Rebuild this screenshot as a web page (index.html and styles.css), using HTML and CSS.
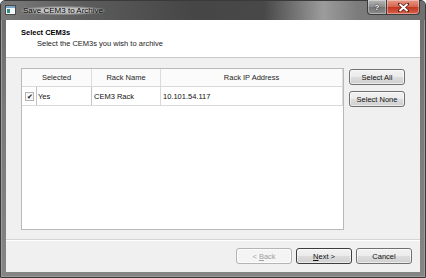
FILE: index.html
```html
<!DOCTYPE html>
<html lang="en">
<head>
    <meta charset="UTF-8">
    <title>Save CEM3 to Archive</title>
    <link rel="stylesheet" href="styles.css">
</head>
<body>
    <div class="window">
        <!-- Title bar -->
        <div class="titlebar">
            <svg class="app-icon" width="11" height="10" viewBox="0 0 11 10">
                <rect x="0.5" y="0.5" width="10" height="9" fill="#f4f7f9" stroke="#4a4a4a"/>
                <rect x="1" y="1" width="9" height="2" fill="#7aa7c9"/>
                <rect x="2" y="4" width="3" height="4" fill="#2f8f86"/>
            </svg>
            <span class="title">Save CEM3 to Archive</span>
            <div class="caption-buttons">
                <div class="cap-btn help">?</div>
                <div class="cap-btn close">
                    <svg width="11" height="9" viewBox="0 0 11 9">
                        <path d="M1.5 1 L9.5 8 M9.5 1 L1.5 8" stroke="#5a1d12" stroke-width="3.4" stroke-linecap="square"/>
                        <path d="M1.5 1 L9.5 8 M9.5 1 L1.5 8" stroke="#fff" stroke-width="2"/>
                    </svg>
                </div>
            </div>
        </div>

        <div class="client">
            <!-- Wizard page header -->
            <div class="wizard-header">
                <div class="page-title">Select CEM3s</div>
                <div class="page-subtitle">Select the CEM3s you wish to archive</div>
            </div>

            <div class="wizard-body">
                <div class="grid">
                    <div class="grid-head">
                        <div class="head-cell">Selected</div>
                        <div class="head-cell">Rack Name</div>
                        <div class="head-cell">Rack IP Address</div>
                    </div>
                    <div class="grid-row">
                        <div class="cell check-cell"><span class="checkbox">&#10004;</span></div>
                        <div class="cell yes-cell">Yes</div>
                        <div class="cell">CEM3 Rack</div>
                        <div class="cell">10.101.54.117</div>
                    </div>
                </div>
                <div class="side-buttons">
                    <button class="btn">Select All</button>
                    <button class="btn">Select None</button>
                </div>
            </div>

            <div class="wizard-footer">
                <button class="btn" disabled>&lt; <u>B</u>ack</button>
                <button class="btn default"><u>N</u>ext &gt;</button>
                <button class="btn">Cancel</button>
            </div>
        </div>
    </div>
</body>
</html>
```

FILE: styles.css
```css
* {
    margin: 0;
    padding: 0;
    box-sizing: border-box;
}

body {
    font-family: 'Liberation Sans', Arial, sans-serif;
    font-size: 7.5px;
    background: #ffffff;
}

.window {
    width: 426px;
    height: 278px;
    display: flex;
    flex-direction: column;
    border: 1px solid #3a3a3a;
    border-radius: 5px 5px 0 0;
    background: linear-gradient(to bottom, #6c6c6c, #7a7a7a 40%, #858585);
    box-shadow: inset 1px 0 #9a9a9a, inset -1px 0 #9a9a9a, inset 0 -1px #9a9a9a;
}

/* Title bar */
.titlebar {
    height: 19px;
    display: flex;
    align-items: center;
    padding: 0 5px 0 4px;
    border-radius: 4px 4px 0 0;
    background: linear-gradient(to right, #7a7a7a 0%, #5c5c5c 20%, #464646 45%, #484848 62%, #9c9c9c 76%, #7c7c7c 84%, #6f6f6f 100%);
}

.app-icon {
    margin-right: 5px;
    margin-top: -1px;
}

.title {
    color: #000;
    font-size: 8px;
    padding: 0 2px;
    border-radius: 6px;
    background: radial-gradient(ellipse at center, rgba(220,220,220,0.75) 40%, rgba(200,200,200,0) 75%);
    text-shadow: 0 0 2px rgba(255,255,255,0.7);
}

.caption-buttons {
    margin-left: auto;
    align-self: flex-start;
    margin-top: -1px;
    display: flex;
}

.cap-btn {
    height: 15px;
    display: flex;
    align-items: center;
    justify-content: center;
    border: 1px solid #3c3c3c;
    border-top: none;
    box-shadow: inset 0 0 0 1px rgba(255,255,255,0.35);
}

.help {
    width: 19px;
    border-right: none;
    border-radius: 0 0 0 4px;
    background: linear-gradient(to bottom, #b5b5b5, #8c8c8c 50%, #777 51%, #8a8a8a);
    color: #fff;
    font-weight: bold;
    font-size: 8px;
    text-shadow: 0 0 2px #222, 0 0 1px #222;
}

.close {
    width: 34px;
    border-radius: 0 0 4px 0;
    background: linear-gradient(to bottom, #e79a88, #d4634c 50%, #c3371f 51%, #d6604a);
}

/* Client area */
.client {
    flex: 1;
    margin: 0 5px 5px 5px;
    display: flex;
    flex-direction: column;
    background: #f0f0f0;
}

.wizard-header {
    height: 38px;
    background: #fff;
    border-bottom: 1px solid #c9c9c9;
    padding: 8px 0 0 15px;
}

.page-title {
    font-weight: bold;
    color: #000;
    line-height: 9px;
}

.page-subtitle {
    color: #222;
    line-height: 9px;
    margin-top: 2px;
    padding-left: 16px;
}

.wizard-body {
    flex: 1;
    display: flex;
    gap: 5px;
    padding: 10px 15px 9px 15px;
}

.grid {
    flex: 1;
    background: #fff;
    border: 1px solid #b9b9b9;
}

.grid-head {
    display: grid;
    grid-template-columns: 70px 69px 1fr;
    height: 18px;
    border-bottom: 1px solid #d9d9d9;
    background: #fbfbfb;
}

.head-cell {
    display: flex;
    align-items: center;
    justify-content: center;
    color: #1e1e1e;
    border-right: 1px solid #dcdcdc;
}

.grid-row {
    display: grid;
    grid-template-columns: 14px 56px 69px 1fr;
    height: 19px;
    border-bottom: 1px solid #d9d9d9;
}

.cell {
    display: flex;
    align-items: center;
    padding-left: 2px;
    color: #111;
    border-right: 1px solid #d9d9d9;
}

.check-cell {
    border-right: none;
    padding-left: 3px;
}

.yes-cell {
    border-left: 1px solid #c4c4c4;
    border-right-color: #c4c4c4;
    padding-left: 1px;
}

.checkbox {
    width: 9px;
    height: 9px;
    border: 1px solid #b4b4b4;
    background: #f7f7f7;
    font-size: 7px;
    line-height: 8px;
    text-align: center;
    color: #111;
}

.side-buttons {
    display: flex;
    flex-direction: column;
    gap: 6px;
    padding-top: 1px;
}

/* Buttons */
.btn {
    width: 56px;
    height: 16px;
    font-family: inherit;
    font-size: 7.5px;
    color: #111;
    border: 1px solid #707070;
    border-radius: 3px;
    background: linear-gradient(to bottom, #f2f2f2, #ebebeb 50%, #dddddd 51%, #cfcfcf);
    box-shadow: inset 0 0 0 1px rgba(255,255,255,0.6);
}

.btn u {
    text-decoration: underline;
}

.btn:disabled {
    color: #a0a0a0;
    border-color: #b5b5b5;
    background: #f4f4f4;
}

.btn.default {
    border-color: #3c3c3c;
}

.wizard-footer {
    height: 33px;
    display: flex;
    justify-content: flex-end;
    gap: 4px;
    padding: 8px 8px 0 0;
    border-top: 1px solid #d5d5d5;
    box-shadow: inset 0 1px #ffffff;
}
```
